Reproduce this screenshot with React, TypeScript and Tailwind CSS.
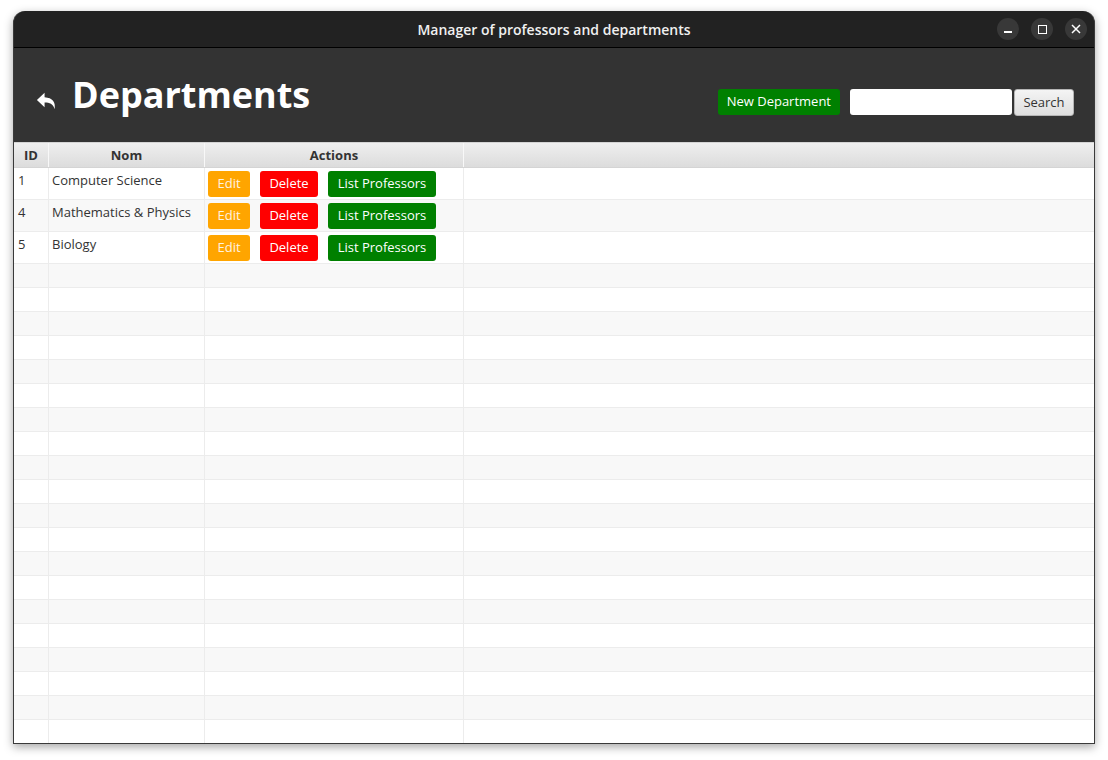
import React from "react";

const depts = [
  { id: 1, name: "Computer Science" },
  { id: 4, name: "Mathematics & Physics" },
  { id: 5, name: "Biology" },
];

const font = { fontFamily: '"Open Sans", "Noto Sans", sans-serif' };

function Cells({ tall, odd, children }: { tall?: boolean; odd: boolean; children?: React.ReactNode[] }) {
  const c = children || [null, null, null];
  return (
    <div
      className={`flex border-b border-[#ececec] ${tall ? "h-[32px]" : "h-[24px]"} ${odd ? "bg-[#f8f8f8]" : "bg-white"}`}
    >
      <div className="w-[35px] shrink-0 border-r border-[#ececec] pl-[4px] pt-[3px]">{c[0]}</div>
      <div className="w-[156px] shrink-0 border-r border-[#ececec] pl-[3px] pt-[3px]">{c[1]}</div>
      <div className="w-[259px] shrink-0 border-r border-[#ececec] flex items-center gap-[10px] pl-[3px]">{c[2]}</div>
      <div className="flex-1" />
    </div>
  );
}

export default function App() {
  return (
    <div className="w-[1108px] h-[760px] bg-white pt-[11px] pl-[13px] overflow-hidden" style={font}>
      <div className="w-[1082px] h-[733px] rounded-t-[12px] bg-[#222222] shadow-[0_3px_10px_rgba(0,0,0,0.35)] border-x border-b border-[#3a3a3a] flex flex-col overflow-hidden">
        {/* title bar */}
        <div className="h-[37px] shrink-0 flex items-center relative border-b border-black">
          <div className="flex-1 text-center text-[14px] font-semibold text-[#f0f0f0] pt-[1px]">
            Manager of professors and departments
          </div>
          <div className="absolute right-[7px] top-[7px] flex gap-[12px]">
            <div className="w-[22px] h-[22px] rounded-full bg-[#383838] flex items-center justify-center">
              <div className="w-[8px] h-[1.5px] bg-white mt-[6px]" />
            </div>
            <div className="w-[22px] h-[22px] rounded-full bg-[#383838] flex items-center justify-center">
              <div className="w-[9px] h-[9px] border-[1.5px] border-white" />
            </div>
            <div className="w-[22px] h-[22px] rounded-full bg-[#383838] flex items-center justify-center">
              <svg width="10" height="10" viewBox="0 0 10 10">
                <path d="M1 1L9 9M9 1L1 9" stroke="white" strokeWidth="1.5" />
              </svg>
            </div>
          </div>
        </div>

        {/* header */}
        <div className="h-[94px] shrink-0 bg-[#333333] flex items-center pl-[21px] pr-[20px]">
          <svg width="23" height="23" viewBox="0 0 24 24" className="mt-[10px]">
            <path
              d="M10 4L2 11.5L10 19V14.2C15.5 14.2 18.7 15.6 20.5 21C21.6 13.6 18.5 9.2 10 8.6Z"
              fill="white"
            />
          </svg>
          <div className="ml-[14px] text-[36px] font-bold text-white leading-none mb-[1px]">Departments</div>
          <div className="flex-1" />
          <button className="h-[26px] px-[9px] rounded-[3px] bg-[#008000] text-white text-[13px] mt-[14px]">
            New Department
          </button>
          <input className="ml-[10px] w-[162px] h-[26px] rounded-[3px] bg-white mt-[14px] outline-none" />
          <button className="ml-[2px] w-[60px] h-[27px] rounded-[3px] border border-[#b5b5b5] bg-gradient-to-b from-[#f4f4f4] to-[#dedede] text-[#333] text-[13px] mt-[15px]">
            Search
          </button>
        </div>

        {/* table */}
        <div className="flex-1 bg-white overflow-hidden text-[13px] text-[#333]">
          <div className="flex h-[26px] bg-gradient-to-b from-[#efefef] to-[#dcdcdc] border-t border-[#d4d4d4] border-b border-[#c8c8c8] font-bold">
            <div className="w-[35px] shrink-0 border-r border-[#f8f8f8] text-center leading-[24px]">ID</div>
            <div className="w-[156px] shrink-0 border-r border-[#f8f8f8] text-center leading-[24px]">Nom</div>
            <div className="w-[259px] shrink-0 border-r border-[#f8f8f8] text-center leading-[24px]">Actions</div>
            <div className="flex-1" />
          </div>
          {depts.map((d, i) => (
            <Cells key={d.id} tall odd={i % 2 === 1}>
              {[
                <span className="text-[#333]">{d.id}</span>,
                <span>{d.name}</span>,
                <>
                  <button className="h-[26px] w-[42px] rounded-[3px] bg-[#ffa500] text-[#fff3e0]">Edit</button>
                  <button className="h-[26px] w-[58px] rounded-[3px] bg-[#ff0000] text-white">Delete</button>
                  <button className="h-[26px] w-[108px] rounded-[3px] bg-[#008000] text-white">List Professors</button>
                </>,
              ]}
            </Cells>
          ))}
          {Array.from({ length: 21 }).map((_, i) => (
            <Cells key={i} odd={i % 2 === 0} />
          ))}
        </div>
      </div>
    </div>
  );
}
